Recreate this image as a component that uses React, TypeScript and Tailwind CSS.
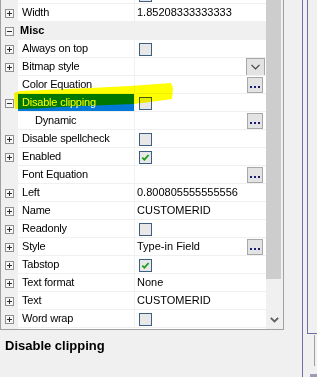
import React from "react";

type RowProps = {
  exp?: "plus" | "minus" | null;
  name?: string;
  indent?: boolean;
  category?: boolean;
  selected?: boolean;
  value?: React.ReactNode;
};

function Expander({ kind }: { kind: "plus" | "minus" }) {
  return (
    <div className="relative w-[9px] h-[9px] border border-[#8f8f8f] bg-[#f7f7f7]">
      <div className="absolute left-[1px] top-[3px] w-[5px] h-[1px] bg-[#2d2d2d]" />
      {kind === "plus" && <div className="absolute left-[3px] top-[1px] w-[1px] h-[5px] bg-[#2d2d2d]" />}
    </div>
  );
}

function Check({ checked }: { checked?: boolean }) {
  return (
    <div className="self-start mt-[3px] ml-[2px] w-[13px] h-[13px] border border-[#3c5e82] bg-[#e8e8e8] flex items-center justify-center">
      {checked && (
        <svg width="11" height="11" viewBox="0 0 11 11">
          <path d="M2.3 5.6 L4.4 7.7 L8.6 3" stroke="#1f9d1f" strokeWidth="1.8" fill="none" />
        </svg>
      )}
    </div>
  );
}

function Dots() {
  return (
    <div className="self-start mt-[1px] ml-auto mr-[3px] w-[16px] h-[16px] border border-[#a8a8a8] bg-[#e3e3e3] flex items-start justify-center pt-[8px] gap-[2px]">
      <div className="w-[2px] h-[2px] bg-[#1b1b70]" />
      <div className="w-[2px] h-[2px] bg-[#1b1b70]" />
      <div className="w-[2px] h-[2px] bg-[#1b1b70]" />
    </div>
  );
}

function DropBtn() {
  return (
    <div className="self-start ml-auto mr-[1px] w-[19px] h-[18px] border border-[#a8a8a8] bg-[#e3e3e3] flex items-center justify-center">
      <svg width="9" height="6" viewBox="0 0 9 6">
        <path d="M0.5 0.8 L4.5 4.8 L8.5 0.8" stroke="#404040" strokeWidth="1.2" fill="none" />
      </svg>
    </div>
  );
}

function Row({ exp, name, indent, category, selected, value }: RowProps) {
  return (
    <div className="flex h-[18px] shrink-0">
      <div className="w-[17px] bg-[#f0f0f0] flex justify-center pt-[6px]">{exp && <Expander kind={exp} />}</div>
      {category ? (
        <div className="w-[248px] bg-[#f0f0f0] flex items-center pl-[2px] font-bold">{name}</div>
      ) : (
        <>
          <div
            className={
              "w-[116px] border-t border-[#f0f0f0] flex items-center whitespace-nowrap tracking-[-0.2px] " +
              (indent ? "pl-[17px] " : "pl-[4px] ") +
              (selected ? "bg-[#0078d7] text-white" : "bg-white")
            }
          >
            {name}
          </div>
          <div className="w-[132px] border-t border-l border-[#f0f0f0] bg-white flex items-center pl-[2px] whitespace-nowrap">
            {value}
          </div>
        </>
      )}
    </div>
  );
}

export default function App() {
  const rows: RowProps[] = [
    { exp: "plus", name: "", value: <Check /> },
    { exp: "plus", name: "Width", value: <span>1.85208333333333</span> },
    { exp: "minus", name: "Misc", category: true },
    { exp: "plus", name: "Always on top", value: <Check /> },
    { exp: "plus", name: "Bitmap style", value: <DropBtn /> },
    { exp: null, name: "Color Equation", value: <Dots /> },
    { exp: "minus", name: "Disable clipping", selected: true, value: <Check /> },
    { exp: null, name: "Dynamic", indent: true, value: <Dots /> },
    { exp: "plus", name: "Disable spellcheck", value: <Check /> },
    { exp: "plus", name: "Enabled", value: <Check checked /> },
    { exp: null, name: "Font Equation", value: <Dots /> },
    { exp: "plus", name: "Left", value: <span>0.800805555555556</span> },
    { exp: "plus", name: "Name", value: <span>CUSTOMERID</span> },
    { exp: "plus", name: "Readonly", value: <Check /> },
    {
      exp: "plus",
      name: "Style",
      value: (
        <>
          <span>Type-in Field</span>
          <Dots />
        </>
      ),
    },
    { exp: "plus", name: "Tabstop", value: <Check checked /> },
    { exp: "plus", name: "Text format", value: <span>None</span> },
    { exp: "plus", name: "Text", value: <span>CUSTOMERID</span> },
    { exp: "plus", name: "Word wrap", value: <Check /> },
  ];

  return (
    <div
      className="relative w-[317px] h-[377px] bg-[#f0f0f0] flex overflow-hidden text-[11px] text-black leading-[13px]"
      style={{ fontFamily: '"Liberation Sans", Arial, sans-serif' }}
    >
      {/* left panel */}
      <div className="w-[284px] flex flex-col shrink-0">
        <div className="h-[330px] border-l border-r border-b border-[#a0a0a0] flex overflow-hidden shrink-0">
          <div className="w-[265px] flex flex-col overflow-hidden">
            <div className="flex flex-col mt-[-15px]">
              {rows.map((r, i) => (
                <Row key={i} {...r} />
              ))}
            </div>
            <div className="flex flex-1">
              <div className="w-[17px] bg-[#f0f0f0]" />
              <div className="flex-1 bg-white border-t border-[#f0f0f0]" />
            </div>
          </div>
          {/* scrollbar */}
          <div className="w-[17px] bg-[#f0f0f0] flex flex-col">
            <div className="w-[15px] h-[279px] bg-[#cdcdcd]" />
            <div className="flex-1" />
            <div className="h-[17px] flex items-center justify-center mb-[1px]">
              <svg width="9" height="6" viewBox="0 0 9 6">
                <path d="M0.8 0.8 L4.5 4.5 L8.2 0.8" stroke="#606060" strokeWidth="1.8" fill="none" />
              </svg>
            </div>
          </div>
        </div>
        <div className="pl-[5px] pt-[8px] text-[13px] leading-[15px] font-bold">Disable clipping</div>
      </div>

      {/* right side */}
      <div className="flex-1 pl-[18px]">
        <div className="h-full border-l border-[#6d6dab] flex flex-col">
          <div className="ml-[4px] h-[334px] border-l border-b border-[#6d6dab] shrink-0" />
          <div className="ml-[11px] mt-[1px] h-[31px] border-l border-[#a0a0a0] shrink-0" />
          <div className="ml-[7px] mt-[8px] h-[3px] bg-[#9c9cb8] shrink-0" />
        </div>
      </div>

      {/* highlighter marker annotation */}
      <svg
        className="absolute left-0 top-0 pointer-events-none mix-blend-multiply"
        width="317"
        height="377"
        viewBox="0 0 317 377"
      >
        <path
          d="M14,93 L20,91 L90,88 L130,86 L171,83 L173,88 L172,99 L150,102 L133,104 L60,107 L35,108.5 L15,109 Z"
          fill="#ffff00"
        />
      </svg>
    </div>
  );
}
